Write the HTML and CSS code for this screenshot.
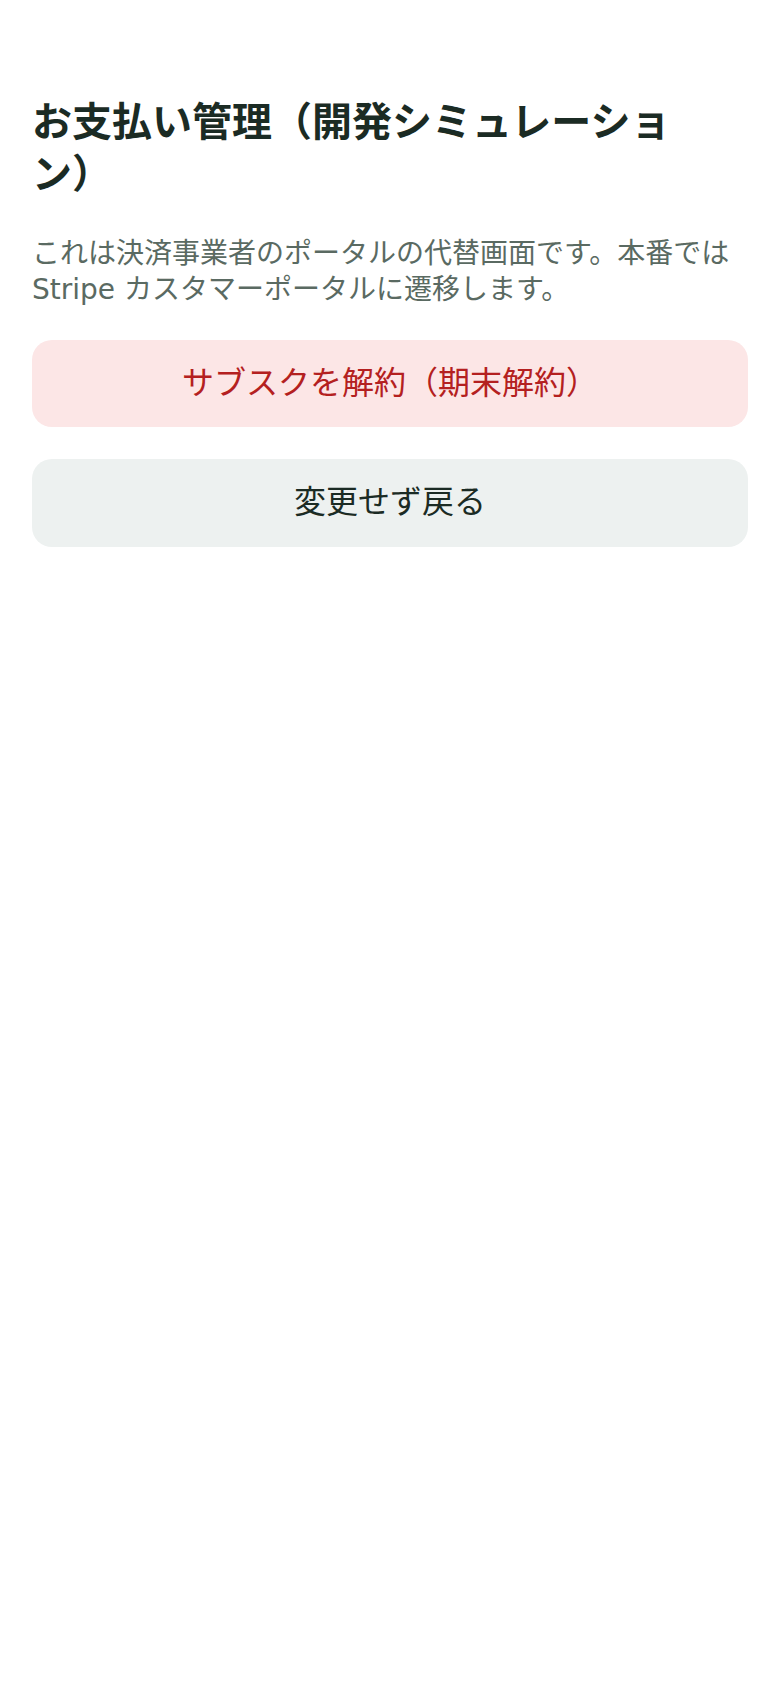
FILE: index.html
```html
<!DOCTYPE html>
<html lang="ja">
<head>
    <meta charset="UTF-8">
    <meta name="viewport" content="width=device-width, initial-scale=1.0">
    <title>お支払い管理</title>
    <link rel="stylesheet" href="styles.css">
</head>
<body>
    <div class="portal">
        <h1>お支払い管理（開発シミュレーション）</h1>
        <p class="note">これは決済事業者のポータルの代替画面です。本番では Stripe カスタマーポータルに遷移します。</p>

        <div class="actions">
            <button type="button" class="btn btn-danger">サブスクを解約（期末解約）</button>
            <button type="button" class="btn btn-plain">変更せず戻る</button>
        </div>
    </div>
</body>
</html>
```

FILE: styles.css
```css
* { margin: 0; padding: 0; box-sizing: border-box; }
body {
    font-family: "DejaVu Sans", "Noto Sans CJK JP", sans-serif;
    background: #fff;
    color: #1b2b24;
    text-spacing-trim: space-all;
}
.portal {
    padding: 96px 32px 40px;
}
h1 {
    font-size: 40px;
    line-height: 1.3;
    font-weight: bold;
    color: #1b2b24;
    padding-right: 24px;
    margin-bottom: 36px;
}
.note {
    font-size: 28px;
    line-height: 1.3;
    color: #5a6a62;
}
.actions {
    display: flex;
    flex-direction: column;
    gap: 32px;
    margin-top: 31px;
}
.btn {
    width: 100%;
    border: none;
    border-radius: 20px;
    font-family: inherit;
    font-size: 32px;
    line-height: 1.3;
    padding: 23px 16px;
    cursor: pointer;
}
.btn-danger {
    background: #fce6e6;
    color: #b42020;
}
.btn-plain {
    background: #edf1f0;
    color: #1b2b24;
}
```
